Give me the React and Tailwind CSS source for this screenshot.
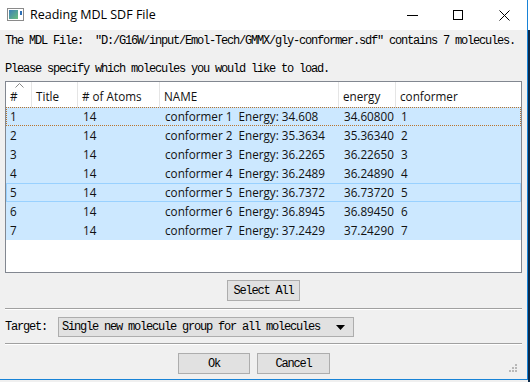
import React from 'react';

const rows = [
  ['1', '', '14', 'conformer 1  Energy: 34.608', '34.60800', '1'],
  ['2', '', '14', 'conformer 2  Energy: 35.3634', '35.36340', '2'],
  ['3', '', '14', 'conformer 3  Energy: 36.2265', '36.22650', '3'],
  ['4', '', '14', 'conformer 4  Energy: 36.2489', '36.24890', '4'],
  ['5', '', '14', 'conformer 5  Energy: 36.7372', '36.73720', '5'],
  ['6', '', '14', 'conformer 6  Energy: 36.8945', '36.89450', '6'],
  ['7', '', '14', 'conformer 7  Energy: 37.2429', '37.24290', '7'],
];

const cols = 'grid grid-cols-[26px_46px_82px_179px_57px_1fr]';

function AppIcon() {
  return (
    <svg width="17" height="13" viewBox="0 0 17 13">
      <rect x="0.5" y="0.5" width="16" height="12" fill="#fff" stroke="#8a8a8a" />
      <defs>
        <linearGradient id="g" x1="0" y1="0" x2="1" y2="1">
          <stop offset="0" stopColor="#3c7fb8" />
          <stop offset="1" stopColor="#6cc07a" />
        </linearGradient>
      </defs>
      <rect x="2" y="2" width="9" height="9" fill="url(#g)" />
      <rect x="13" y="3" width="2" height="4" fill="#2d6fb5" />
    </svg>
  );
}

function Bouton({ children, className }) {
  return (
    <div
      className={
        'h-[21px] flex items-center justify-center bg-[#e1e1e1] border border-[#adadad] ' +
        className
      }
    >
      {children}
    </div>
  );
}

export default function App() {
  const mono = "font-['Liberation_Mono',monospace] text-[12px] tracking-[-1.2px] leading-[14px] text-black whitespace-pre";

  return (
    <div className="w-[530px] h-[382px] bg-[#f0f0f0] overflow-hidden flex">
      <div className="w-[528px] h-[380px] flex flex-col border-r border-b border-[#1883d7] shrink-0">
        {/* barre de titre */}
        <div className="h-[30px] bg-white flex items-center shrink-0">
          <div className="ml-[7px] mt-[-2px] flex"><AppIcon /></div>
          <div className="ml-[6px] font-['Open_Sans',sans-serif] text-[12.5px] text-black">
            Reading MDL SDF File
          </div>
          <div className="ml-auto flex items-center h-full">
            <div className="w-[46px] h-full flex items-center justify-center">
              <div className="w-[11px] h-px bg-black"></div>
            </div>
            <div className="w-[46px] h-full flex items-center justify-center">
              <div className="w-[10px] h-[10px] border border-black"></div>
            </div>
            <div className="w-[46px] h-full flex items-center justify-center">
              <svg width="11" height="11" viewBox="0 0 11 11">
                <path d="M0.5 0.5 L10.5 10.5 M10.5 0.5 L0.5 10.5" stroke="#000" strokeWidth="1" />
              </svg>
            </div>
          </div>
        </div>

        <div className="px-[5px] flex flex-col">
          <div className={mono + ' mt-[4px]'}>
            {'The MDL File:  "D:/G16W/input/Emol-Tech/GMMX/gly-conformer.sdf" contains 7 molecules.'}
          </div>
          <div className={mono + ' mt-[14px]'}>
            Please specify which molecules you would like to load.
          </div>

          {/* tableau */}
          <div className="mt-[5px] h-[192px] border border-[#828790] bg-white font-['Open_Sans',sans-serif] text-[11.7px] text-[#111]">
            <div className={cols + ' h-[25px]'}>
              {['#', 'Title', '# of Atoms', 'NAME', 'energy', 'conformer'].map(function (h, i) {
                return (
                  <div
                    key={h}
                    className={
                      'relative pl-[4px] pt-[6px] leading-[16px] ' +
                      (i < 5 ? 'border-r border-[#e5e5e5]' : '')
                    }
                  >
                    {i === 0 && (
                      <svg className="absolute left-[9px] top-[1px]" width="9" height="5" viewBox="0 0 9 5">
                        <path d="M0.5 4.5 L4.5 0.5 L8.5 4.5" fill="none" stroke="#888" />
                      </svg>
                    )}
                    {h}
                  </div>
                );
              })}
            </div>
            {rows.map(function (r, idx) {
              let bord = 'border border-transparent';
              if (idx === 0) bord = 'border border-dotted border-[#b8742f]';
              if (idx === 4) bord = 'border border-[#99d1ff]';
              return (
                <div key={idx} className={cols + ' h-[19px] bg-[#cce8ff] ' + bord}>
                  {r.map(function (c, j) {
                    return (
                      <div
                        key={j}
                        className={'leading-[17px] whitespace-pre ' + (j === 0 ? 'pl-[3px]' : 'pl-[4px]')}
                      >
                        {c}
                      </div>
                    );
                  })}
                </div>
              );
            })}
          </div>

          <div className="flex justify-center mt-[7px]">
            <Bouton className="w-[73px]">
              <span className={mono}>Select All</span>
            </Bouton>
          </div>

          <div className="mt-[7px] h-px bg-[#a0a0a0]"></div>
          <div className="h-px bg-white"></div>

          <div className="mt-[7px] flex items-center h-[20px]">
            <span className={mono + ' w-[53px]'}>Target:</span>
            <div className="w-[296px] h-[20px] bg-[#e1e1e1] border border-[#adadad] flex items-center pl-[3px]">
              <span className={mono}>Single new molecule group for all molecules</span>
              <svg className="ml-auto mr-[8px]" width="9" height="5" viewBox="0 0 9 5">
                <path d="M0 0 L9 0 L4.5 5 Z" fill="#000" />
              </svg>
            </div>
          </div>

          <div className="mt-[6px] h-px bg-[#a0a0a0]"></div>
          <div className="h-px bg-white"></div>

          <div className="flex justify-center gap-[7px] mt-[8px] pr-[19px]">
            <Bouton className="w-[72px]">
              <span className={mono}>Ok</span>
            </Bouton>
            <Bouton className="w-[73px]">
              <span className={mono}>Cancel</span>
            </Bouton>
          </div>
        </div>

        {/* poignee */}
        <div className="relative flex-1">
          <svg className="absolute right-[9px] bottom-[6px]" width="9" height="9" viewBox="0 0 9 9">
            <rect x="6" y="0" width="2" height="2" fill="#b8b8b8" />
            <rect x="3" y="3" width="2" height="2" fill="#b8b8b8" />
            <rect x="6" y="3" width="2" height="2" fill="#b8b8b8" />
            <rect x="0" y="6" width="2" height="2" fill="#b8b8b8" />
            <rect x="3" y="6" width="2" height="2" fill="#b8b8b8" />
            <rect x="6" y="6" width="2" height="2" fill="#b8b8b8" />
          </svg>
        </div>
      </div>
      {/* fond du bureau */}
      <div className="flex-1 flex flex-col">
        <div className="h-[30px] bg-white"></div>
        <div className="flex-1 bg-[#0b2a4a]"></div>
      </div>
    </div>
  );
}
